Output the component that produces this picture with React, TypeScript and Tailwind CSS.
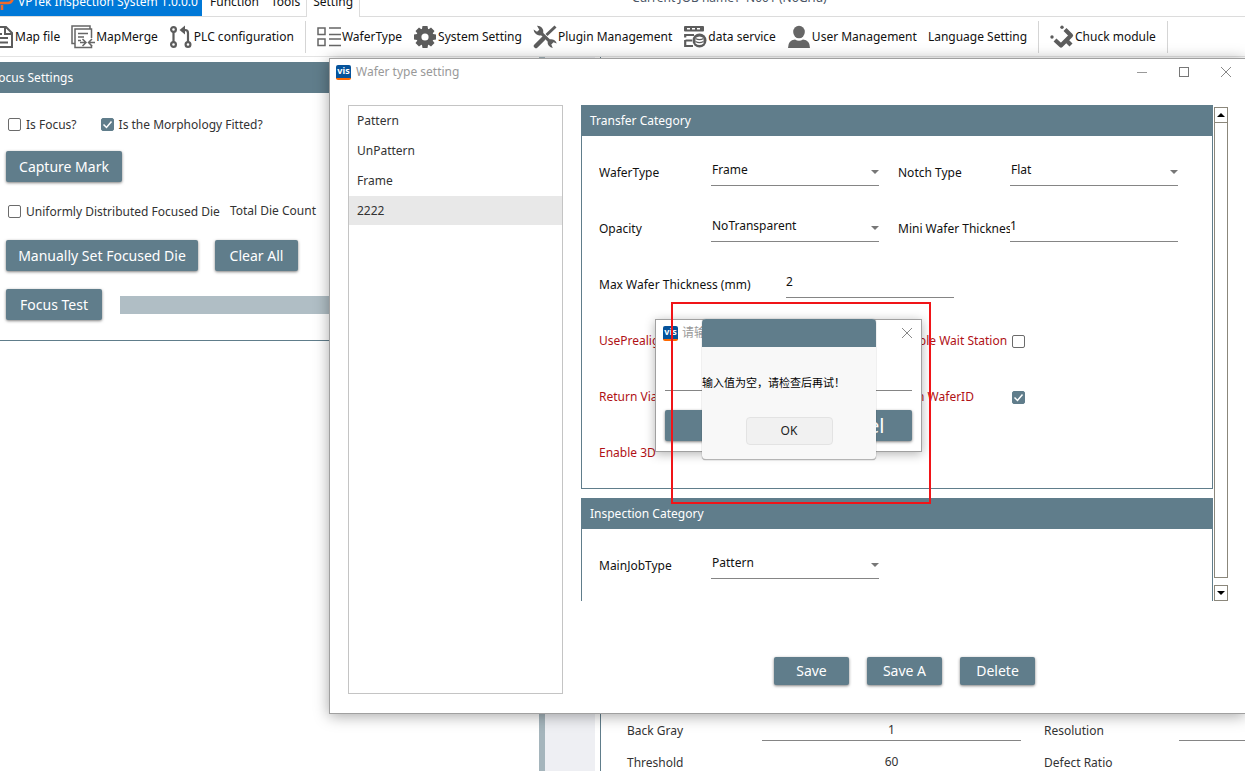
import { useId, type ReactNode } from "react";
import clsx from "clsx";

const FileIcon = () => (
  <svg viewBox="0 0 24 24" className="h-6 w-6 shrink-0" fill="none" stroke="#5c5c5c" strokeWidth="2" aria-hidden="true">
    <path d="M4 2h12l6 6v14H4z" />
    <path d="M15 2v7h7M8 13h10M8 17.500h10M8 9h4" />
  </svg>
);

const MergeIcon = () => (
  <svg viewBox="0 0 24 24" className="h-6 w-6 shrink-0" fill="none" stroke="#666" strokeWidth="1.500" aria-hidden="true">
    <path d="M4 18.500H1V1h18v3" />
    <path d="M20.500 13V4H4v18.500h16.500V20" />
    <path d="M7 8.500h10M7 12h6M7 15.500h3" />
    <path d="M9 17.500h5M11.500 14l3.500 3.500-3.500 3.500M24 17.500h-6M21 14l-3.500 3.500L21 21" />
  </svg>
);

const PlcIcon = () => (
  <svg viewBox="0 0 24 24" className="h-6 w-6 shrink-0" fill="none" stroke="#5c5c5c" strokeWidth="2.200" aria-hidden="true">
    <circle cx="4.500" cy="4.500" r="2.400" />
    <circle cx="4.500" cy="19.500" r="2.400" />
    <circle cx="19" cy="19.500" r="2.400" />
    <path d="M4.500 7v10M19 17V8q0-3-3-3h-3" />
    <path d="M16 0.500v9L10.500 5z" fill="#5c5c5c" stroke="none" />
  </svg>
);

const WaferIcon = () => (
  <svg viewBox="0 0 24 24" className="h-6 w-6 shrink-0" fill="none" stroke="#666" strokeWidth="1.500" aria-hidden="true">
    <path d="M1 3h7v6.500H1zM1 14h7v6.500H1z" />
    <path d="M12 3h12M12 9.500h12M12 14h12M12 20.500h12" />
  </svg>
);

const GearIcon = () => (
  <svg viewBox="0 0 24 24" className="h-6 w-6 shrink-0" aria-hidden="true">
    <g fill="#5c5c5c">
      <path d="M9.500 1h5l.8 4.500h-6.600zM9.500 23h5l.8-4.500h-6.600zM1 9.500v5l4.500.8v-6.600zM23 9.500v5l-4.500.8v-6.600z" />
      <path d="M2.500 6l3.500-3.500 4 3-4.500 4.500zM21.500 6L18 2.500l-4 3 4.500 4.500zM2.500 18L6 21.500l4-3L5.500 14zM21.500 18L18 21.500l-4-3 4.500-4.500z" />
      <circle cx="12" cy="12" r="8.500" />
    </g>
    <circle cx="12" cy="12" r="3.600" fill="#fff" />
  </svg>
);

const ToolsIcon = () => (
  <svg viewBox="0 0 24 24" className="h-6 w-6 shrink-0" aria-hidden="true">
    <path
      d="M4 .8a6 6 0 0 1 6.300 7.200l6.500 6.300a6 6 0 0 1 7 4.200l-3.300-1.300-2.200 2.300 1.500 3.500a6 6 0 0 1-5.200-6.600L8 10.200A6 6 0 0 1 .6 4.500L4 6.800l2.300-2z"
      fill="#5c5c5c"
    />
    <path d="M22.500 1.500L13.500 10" stroke="#5c5c5c" strokeWidth="3" />
    <path d="M10 14L3 21" stroke="#5c5c5c" strokeWidth="4.500" strokeLinecap="round" />
  </svg>
);

const DataIcon = () => (
  <svg viewBox="0 0 24 24" className="h-6 w-6 shrink-0" fill="none" aria-hidden="true">
    <rect x="1" y="1" width="20" height="5.500" rx="1" fill="#5c5c5c" />
    <path d="M4 3.700h3M9 3.700h3M14 3.700h3" stroke="#fff" strokeWidth="1.500" />
    <path d="M11 10H2.500M9 15.500H2.500M10 21H2.500M2.200 9v3.500M2.200 15v7" stroke="#5c5c5c" strokeWidth="2.200" />
    <circle cx="16.500" cy="15.500" r="7" fill="#5c5c5c" />
    <path d="M12.500 13q4-3 8 0v5.500q-4 3-8 0z" fill="#fff" />
    <path d="M12.500 13.500q4 2.200 8 0M12.500 16.500q4 2.200 8 0" stroke="#5c5c5c" strokeWidth="1.200" />
  </svg>
);

const UserIcon = () => (
  <svg viewBox="0 0 24 24" className="h-6 w-6 shrink-0" fill="#666" aria-hidden="true">
    <ellipse cx="12" cy="7" rx="5.800" ry="6.300" />
    <path d="M1 23q0-8 7-8.500 4 2.500 8 0 7 .5 7 8.500z" />
  </svg>
);

const ChuckIcon = () => (
  <svg viewBox="0 0 24 24" className="h-6 w-6 shrink-0" fill="none" stroke="#5c5c5c" aria-hidden="true">
    <circle cx="12" cy="2.200" r="1.700" fill="#5c5c5c" stroke="none" />
    <circle cx="2" cy="12" r="1.700" fill="#5c5c5c" stroke="none" />
    <path d="M15 4.500l6 6-10 10-6-5.500" strokeWidth="4.200" strokeLinejoin="round" />
    <path d="M17 16l4 4" strokeWidth="4.200" />
  </svg>
);

const VisIcon = () => (
  <span className="flex h-[15px] w-[15px] shrink-0 justify-center overflow-hidden rounded-xs border-b-2 border-orange-500 bg-[#06539b] text-[9px] leading-3 font-bold text-white">
    vis
  </span>
);

const CloseIcon = () => (
  <svg viewBox="0 0 12 12" className="h-3 w-3" fill="none" stroke="#888" aria-hidden="true">
    <path d="M1 1l10 10M11 1L1 11" />
  </svg>
);

const CheckBox = ({ id, checked }: { id: string; checked?: boolean }) => (
  <span className="relative flex h-[13px] w-[13px] shrink-0">
    <input
      id={id}
      type="checkbox"
      defaultChecked={checked}
      className="peer h-[13px] w-[13px] appearance-none rounded-xs border border-[#6b6b6b] bg-white checked:border-[#607d8b] checked:bg-[#607d8b]"
    />
    <svg
      viewBox="0 0 13 13"
      className="pointer-events-none absolute inset-0 hidden peer-checked:block"
      fill="none"
      stroke="#fff"
      strokeWidth="1.500"
      aria-hidden="true"
    >
      <path d="M2.500 6.500l3 3 5-6" />
    </svg>
  </span>
);

const Check = ({ label, checked }: { label: string; checked?: boolean }) => {
  const id = useId();
  return (
    <div className="flex items-center gap-[5px]">
      <CheckBox id={id} checked={checked} />
      <label htmlFor={id} className="pt-0.5">
        {label}
      </label>
    </div>
  );
};

const ActionButton = ({ children, className }: { children: ReactNode; className?: string }) => (
  <button
    type="button"
    className={clsx(
      "shrink-0 rounded-xs bg-[#607d8b] text-center text-sm whitespace-nowrap text-white shadow-[0_1px_3px_rgba(0,0,0,0.5)]",
      className,
    )}
  >
    {children}
  </button>
);

type FieldProps = { label: string; value: string; kind?: "select" | "text"; wide?: boolean };

const Field = ({ label, value, kind = "select", wide }: FieldProps) => {
  const id = useId();
  return (
    <div className="flex h-14 items-center">
      <label htmlFor={id} className={clsx("shrink-0 overflow-hidden whitespace-nowrap", wide ? "w-[187px]" : "w-28")}>
        {label}
      </label>
      <div className="relative mb-2.5 w-[168px] shrink-0">
        {kind === "select" ? (
          <>
            <select
              id={id}
              defaultValue={value}
              className="block h-9 w-full appearance-none border-b border-[#858585] pt-1 pl-px outline-none"
            >
              <option>{value}</option>
            </select>
            <svg viewBox="0 0 8 4" className="pointer-events-none absolute top-5 right-0 h-1 w-2" aria-hidden="true">
              <path d="M0 0h8L4 4z" fill="#777" />
            </svg>
          </>
        ) : (
          <input id={id} defaultValue={value} className="block h-9 w-full border-b border-[#858585] pt-1 outline-none" />
        )}
      </div>
    </div>
  );
};

const Flag = ({ label, checked }: { label: string; checked?: boolean }) => {
  const id = useId();
  return (
    <div className="flex h-14 items-center text-[#b01116]">
      <label htmlFor={id} className="w-[114px] shrink-0 whitespace-nowrap">
        {label}
      </label>
      <CheckBox id={id} checked={checked} />
    </div>
  );
};

const PanelTitle = ({ children, className }: { children: ReactNode; className?: string }) => (
  <h2 className={clsx("h-[31px] bg-[#607d8b] leading-8 text-white", className)}>{children}</h2>
);

const ToolItem = ({ icon, children }: { icon?: ReactNode; children: ReactNode }) => (
  <button type="button" className="flex shrink-0 items-center gap-px whitespace-nowrap">
    {icon}
    {children}
  </button>
);

const ToolDivider = () => <span className="h-8 w-px shrink-0 bg-[#d5d5d5]" />;

const Ribbon = () => (
  <header className="shrink-0">
    <div className="-mt-4 flex h-[33px] border-b border-[#dcdcdc]">
      <div className="flex h-8 w-[202px] shrink-0 items-center gap-1 bg-[#0078d7] pt-1 whitespace-nowrap text-white">
        <svg viewBox="0 0 14 20" className="h-5 w-3.5 shrink-0" fill="none" stroke="#f26a2a" strokeWidth="2.500" aria-hidden="true">
          <path d="M0 11h8q4 0 5-5M2 18v-5" />
        </svg>
        VPTek Inspection System 1.0.0.0
      </div>
      <nav className="flex shrink-0 pl-0.5">
        <a href="#function" className="px-1.5 leading-9">
          Function
        </a>
        <a href="#tools" className="px-1.5 leading-9">
          Tools
        </a>
        <a href="#setting" className="-mb-px border-x border-[#dcdcdc] bg-white px-1.5 leading-9">
          Setting
        </a>
      </nav>
      <p className="ml-[272px] leading-7 whitespace-nowrap text-gray-600">Current JOB name：N001 (NoGrid)</p>
    </div>
    <div className="-ml-2.5 flex h-10 items-center gap-[11px] border-b border-[#e4e4e4]">
      <ToolItem icon={<FileIcon />}>Map file</ToolItem>
      <ToolItem icon={<MergeIcon />}>MapMerge</ToolItem>
      <ToolItem icon={<PlcIcon />}>PLC configuration</ToolItem>
      <ToolDivider />
      <ToolItem icon={<WaferIcon />}>WaferType</ToolItem>
      <ToolItem icon={<GearIcon />}>System Setting</ToolItem>
      <ToolItem icon={<ToolsIcon />}>Plugin Management</ToolItem>
      <ToolItem icon={<DataIcon />}>data service</ToolItem>
      <ToolItem icon={<UserIcon />}>User Management</ToolItem>
      <ToolItem>Language Setting</ToolItem>
      <ToolDivider />
      <ToolItem icon={<ChuckIcon />}>Chuck module</ToolItem>
      <ToolDivider />
    </div>
  </header>
);

const FocusPanel = () => (
  <section className="mt-[5px] h-[279px] border-b border-[#607d8b] text-[#333]">
    <PanelTitle>
      <span className="-ml-2">Focus Settings</span>
    </PanelTitle>
    <div className="flex flex-col pl-1.5">
      <div className="mt-[19px] ml-0.5 flex h-6 gap-6">
        <Check label="Is Focus?" />
        <Check label="Is the Morphology Fitted?" checked />
      </div>
      <ActionButton className="mt-[15px] h-[31px] w-[116px]">Capture Mark</ActionButton>
      <div className="mt-[17px] ml-0.5 flex h-6 items-center gap-2.5">
        <Check label="Uniformly Distributed Focused Die" />
        <span>Total Die Count</span>
      </div>
      <div className="mt-[17px] flex gap-[17px]">
        <ActionButton className="h-[31px] w-48">Manually Set Focused Die</ActionButton>
        <ActionButton className="h-[31px] w-[83px]">Clear All</ActionButton>
      </div>
      <div className="mt-[18px] flex items-center gap-[18px]">
        <ActionButton className="h-[31px] w-24">Focus Test</ActionButton>
        <div className="h-[18px] flex-1 bg-[#b0bec5]" />
      </div>
    </div>
  </section>
);

const Param = ({ label, value }: { label: string; value: string }) => {
  const id = useId();
  return (
    <div className="flex h-8 shrink-0 items-center">
      <label htmlFor={id} className="w-[135px] shrink-0">
        {label}
      </label>
      <input id={id} defaultValue={value} className="mb-1 h-6 w-[259px] border-b border-[#858585] pt-0.5 text-center outline-none" />
    </div>
  );
};

const WaferDialog = () => (
  <div
    role="dialog"
    aria-label="Wafer type setting"
    className="absolute top-[58px] right-0 left-[329px] border border-r-0 border-[#a0a0a0] bg-white shadow-[0_2px_14px_rgba(0,0,0,0.35)]"
  >
    <div className="flex h-[46px] items-start">
      <div className="flex h-[26px] items-center gap-[5px] pl-1.5 text-[#999]">
        <VisIcon />
        Wafer type setting
      </div>
      <div className="-mr-0.5 ml-auto flex h-[26px] items-center text-[#888]">
        <button type="button" aria-label="Minimize" className="flex w-[42px] justify-center">
          <span className="h-px w-2.5 bg-[#999]" />
        </button>
        <button type="button" aria-label="Maximize" className="flex w-[42px] justify-center">
          <span className="h-2.5 w-2.5 border border-[#777]" />
        </button>
        <button type="button" aria-label="Close" className="flex w-[42px] justify-center">
          <CloseIcon />
        </button>
      </div>
    </div>
    <div className="flex gap-[18px] pr-[17px] pb-[19px] pl-[18px]">
      <ul className="h-[589px] w-[215px] shrink-0 border border-[#c4c4c4] text-[#333]">
        {["Pattern", "UnPattern", "Frame", "2222"].map((name) => (
          <li key={name}>
            <button
              type="button"
              className={clsx("w-full px-2 text-left", name === "2222" ? "h-[29px] bg-[#e8e8e8]" : "h-[30px]")}
            >
              {name}
            </button>
          </li>
        ))}
      </ul>
      <div className="flex min-w-0 flex-1 flex-col">
        <div className="flex h-[496px] gap-px">
          <div className="min-w-0 flex-1 overflow-hidden">
            <section className="border border-t-0 border-[#607d8b] pb-[7px]">
              <PanelTitle className="pl-2">Transfer Category</PanelTitle>
              <div className="grid grid-cols-[280px_1fr] gap-x-[19px] pt-[9px] pl-[17px]">
                <Field label="WaferType" value="Frame" />
                <Field label="Notch Type" value="Flat" />
                <Field label="Opacity" value="NoTransparent" />
                <Field label="Mini Wafer Thickness" value="1" kind="text" />
                <div className="col-span-2">
                  <Field label="Max Wafer Thickness (mm)" value="2" kind="text" wide />
                </div>
                <Flag label="UsePrealigner" />
                <Flag label="Enable Wait Station" />
                <Flag label="Return Via" />
                <Flag label="Scan WaferID" checked />
                <Flag label="Enable 3D" />
              </div>
            </section>
            <section className="mt-[9px] h-32 border-x border-[#607d8b]">
              <PanelTitle className="pl-2">Inspection Category</PanelTitle>
              <div className="pt-[9px] pl-[17px]">
                <Field label="MainJobType" value="Pattern" />
              </div>
            </section>
          </div>
          <div className="flex w-3.5 flex-col pt-0.5">
            <button type="button" aria-label="Scroll up" className="flex h-4 items-center justify-center border border-[#8b877b]">
              <svg viewBox="0 0 8 4" className="h-1 w-2" aria-hidden="true">
                <path d="M0 4h8L4 0z" />
              </svg>
            </button>
            <div className="mb-[7px] flex-1 border border-t-0 border-[#8b877b]" />
            <button type="button" aria-label="Scroll down" className="flex h-4 items-center justify-center border border-[#8b877b]">
              <svg viewBox="0 0 8 4" className="h-1 w-2" aria-hidden="true">
                <path d="M0 0h8L4 4z" />
              </svg>
            </button>
          </div>
        </div>
        <div className="mt-14 flex justify-center gap-[18px]">
          {["Save", "Save A", "Delete"].map((name) => (
            <ActionButton key={name} className="h-7 w-[75px]">
              {name}
            </ActionButton>
          ))}
        </div>
      </div>
    </div>
  </div>
);

const PromptDialog = () => (
  <div
    role="dialog"
    aria-label="请输入"
    className="absolute top-[319px] left-[655px] h-[133px] w-[267px] border border-[#a0a0a0] bg-white px-[9px] shadow-[0_2px_10px_rgba(0,0,0,0.3)]"
  >
    <div className="flex h-[26px] items-center text-[#999]">
      <span className="mr-1 -ml-0.5">
        <VisIcon />
      </span>
      请输入
      <button type="button" aria-label="Close" className="-mr-px ml-auto">
        <CloseIcon />
      </button>
    </div>
    <input aria-label="请输入" className="block h-[45px] w-full border-b border-[#858585] outline-none" />
    <div className="mt-[19px] flex gap-3">
      <button type="button" aria-label="OK" className="h-[31px] flex-1 rounded-xs bg-[#607d8b] shadow-[0_1px_3px_rgba(0,0,0,0.5)]" />
      <button type="button" className="h-[31px] flex-1 rounded-xs bg-[#607d8b] text-xl leading-8 text-white shadow-[0_1px_3px_rgba(0,0,0,0.5)]">
        Cancel
      </button>
    </div>
  </div>
);

const MessageBox = () => (
  <div
    role="alertdialog"
    aria-label="Message"
    className="absolute top-[319px] left-[702px] flex h-[141px] w-[174px] flex-col items-center overflow-hidden rounded border-b border-[#b5b5b5] bg-[#f8f8f8] shadow-[0_0_1px_rgba(0,0,0,0.6)]"
  >
    <div className="h-7 w-full bg-[#607d8b]" />
    <p className="mt-[26px] w-full text-[11px] leading-5 whitespace-nowrap text-black">输入值为空，请检查后再试！</p>
    <button type="button" className="mt-6 h-7 w-[87px] rounded border border-[#e3e3e3] bg-[#f1f1f1] text-[#222]">
      OK
    </button>
  </div>
);

const App = () => (
  <div className="relative flex h-screen flex-col overflow-hidden bg-white font-['Noto_Sans','Noto_Sans_CJK_SC',sans-serif] text-xs text-[#111]">
    <Ribbon />
    <main className="flex min-h-0 flex-1">
      <div className="w-[539px] shrink-0">
        <FocusPanel />
      </div>
      <div className="w-1.5 shrink-0 bg-[#a5b5bc]" />
      <div className="mr-[5px] w-[50px] shrink-0 bg-[#eeeff3]" />
      <section className="grid min-w-0 flex-1 grid-cols-[394px_394px] content-start gap-x-[23px] overflow-hidden border-l border-[#607d8b] pt-[658px] pl-[26px] text-[#333]">
        <Param label="Back Gray" value="1" />
        <Param label="Resolution" value="" />
        <Param label="Threshold" value="60" />
        <Param label="Defect Ratio" value="" />
      </section>
    </main>
    <WaferDialog />
    <PromptDialog />
    <MessageBox />
    {/* Highlight frame */}
    <div className="pointer-events-none absolute top-[302px] left-[671px] h-[202px] w-[260px] border-2 border-[#f01418]" />
  </div>
);

export default App;
